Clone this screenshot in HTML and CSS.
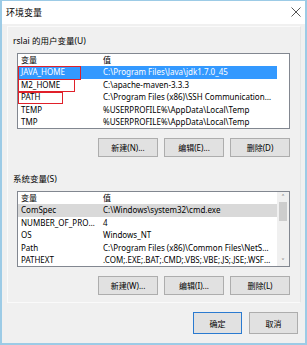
FILE: index.html
```html
<!DOCTYPE html>
<html lang="zh-CN">
<head>
  <meta charset="UTF-8" />
  <title>环境变量</title>
  <link rel="stylesheet" href="styles.css">
</head>
<body>
  <div class="window">
    <div class="titlebar">
      <span class="title">环境变量</span>
      <svg class="close" width="10" height="10" viewBox="0 0 10 10">
        <path d="M0.5 0.5 L9.5 9.5 M9.5 0.5 L0.5 9.5" stroke="#555" stroke-width="1" fill="none"/>
      </svg>
    </div>

    <div class="panel">
      <div class="group-label">rslai 的用户变量(U)</div>
      <div class="list">
        <div class="row head"><span>变量</span><span>值</span></div>
        <div class="row selected"><span>JAVA_HOME</span><span>C:\Program Files\Java\jdk1.7.0_45</span></div>
        <div class="row"><span>M2_HOME</span><span>C:\apache-maven-3.3.3</span></div>
        <div class="row"><span>PATH</span><span>C:\Program Files (x86)\SSH Communications Security\SSH Secure Shell</span></div>
        <div class="row"><span>TEMP</span><span>%USERPROFILE%\AppData\Local\Temp</span></div>
        <div class="row"><span>TMP</span><span>%USERPROFILE%\AppData\Local\Temp</span></div>
        <div class="mark mark-java"></div>
        <div class="mark mark-m2"></div>
        <div class="mark mark-path"></div>
      </div>
      <div class="buttons">
        <button>新建(N)...</button>
        <button>编辑(E)...</button>
        <button>删除(D)</button>
      </div>

      <div class="group-label second">系统变量(S)</div>
      <div class="list scrolled">
        <div class="row head"><span>变量</span><span>值</span></div>
        <div class="row inactive"><span>ComSpec</span><span>C:\Windows\system32\cmd.exe</span></div>
        <div class="row"><span>NUMBER_OF_PROCESSORS</span><span>4</span></div>
        <div class="row"><span>OS</span><span>Windows_NT</span></div>
        <div class="row"><span>Path</span><span>C:\Program Files (x86)\Common Files\NetSarang;C:\Windows</span></div>
        <div class="row"><span>PATHEXT</span><span>.COM;.EXE;.BAT;.CMD;.VBS;.VBE;.JS;.JSE;.WSF;.WSH;.MSC</span></div>
        <div class="scrollbar">
          <span class="arrow">&#x2c4;</span>
          <span class="thumb"></span>
          <span class="track"></span>
          <span class="arrow">&#x2c5;</span>
        </div>
      </div>
      <div class="buttons">
        <button>新建(W)...</button>
        <button>编辑(I)...</button>
        <button>删除(L)</button>
      </div>
    </div>

    <div class="footer">
      <button class="default">确定</button>
      <button>取消</button>
    </div>
  </div>
</body>
</html>
```

FILE: styles.css
```css
body {
  margin: 0;
  font-family: "Noto Sans", "Noto Sans CJK SC", sans-serif;
  font-size: 8px;
  color: #000;
}
.window {
  box-sizing: border-box;
  width: 307px;
  height: 345px;
  border: 2px solid #9ccbe6;
  border-top: 1px solid #9ccbe6;
  background: #f0f0f0;
  display: flex;
  flex-direction: column;
}
.titlebar {
  height: 23px;
  background: #fff;
  display: flex;
  align-items: center;
  justify-content: space-between;
  padding: 0 4px 0 4px;
}
.title {
  font-size: 9px;
}
.close {
  margin-top: -2px;
}
.panel {
  margin: 2px 4px 0 5px;
  height: 277px;
  border: 1px solid #fafafa;
  border-right-color: #e4e4e4;
  padding: 0 0 0 5px;
  box-sizing: border-box;
}
.group-label {
  margin-top: 8px;
  height: 12px;
  line-height: 12px;
  font-size: 8.5px;
}
.group-label.second {
  margin-top: 16px;
}
.list {
  position: relative;
  margin: 6px 0 0 4px;
  width: 273px;
  height: 76px;
  box-sizing: border-box;
  border: 1px solid #828790;
  background: #fff;
  overflow: hidden;
}
.row {
  display: grid;
  grid-template-columns: 82px 177px;
  width: 259px;
  height: 12.5px;
  line-height: 12.5px;
  white-space: nowrap;
}
.row span {
  overflow: hidden;
  text-overflow: ellipsis;
  padding: 0 3px;
}
.scrolled .row span:last-child {
  padding-right: 6px;
}
.row.head {
  height: 12px;
  line-height: 12px;
}
.row.selected {
  background: #3399ff;
  color: #fff;
}
.row.inactive {
  background: #d9d9d9;
}
.mark {
  position: absolute;
  border: 1.5px solid #e0202a;
  box-sizing: border-box;
}
.mark-java {
  left: 0;
  top: 12px;
  width: 63px;
  height: 14px;
}
.mark-m2 {
  left: 0;
  top: 25px;
  width: 57px;
  height: 13px;
}
.mark-path {
  left: 0;
  top: 38px;
  width: 45px;
  height: 12px;
}
.scrollbar {
  position: absolute;
  right: 0;
  top: 0;
  width: 12px;
  height: 100%;
  background: #f0f0f0;
  display: flex;
  flex-direction: column;
  align-items: center;
}
.arrow {
  height: 10px;
  line-height: 12px;
  font-size: 9px;
  color: #606060;
}
.thumb {
  width: 8px;
  height: 19px;
  background: #cdcdcd;
}
.track {
  flex: 1;
}
.buttons {
  display: flex;
  gap: 6px;
  margin: 9px 0 0 85px;
}
button {
  font-family: "Noto Sans", "Noto Sans CJK SC", sans-serif;
  font-size: 8px;
  color: #000;
  width: 60px;
  height: 19px;
  padding: 0;
  background: #e1e1e1;
  border: 1px solid #adadad;
}
.footer {
  display: flex;
  justify-content: flex-end;
  gap: 7px;
  padding: 9px 7px 0 0;
}
.footer button {
  width: 49px;
  height: 22px;
}
.footer button.default {
  border: 1.5px solid #2a7ad0;
}
```
